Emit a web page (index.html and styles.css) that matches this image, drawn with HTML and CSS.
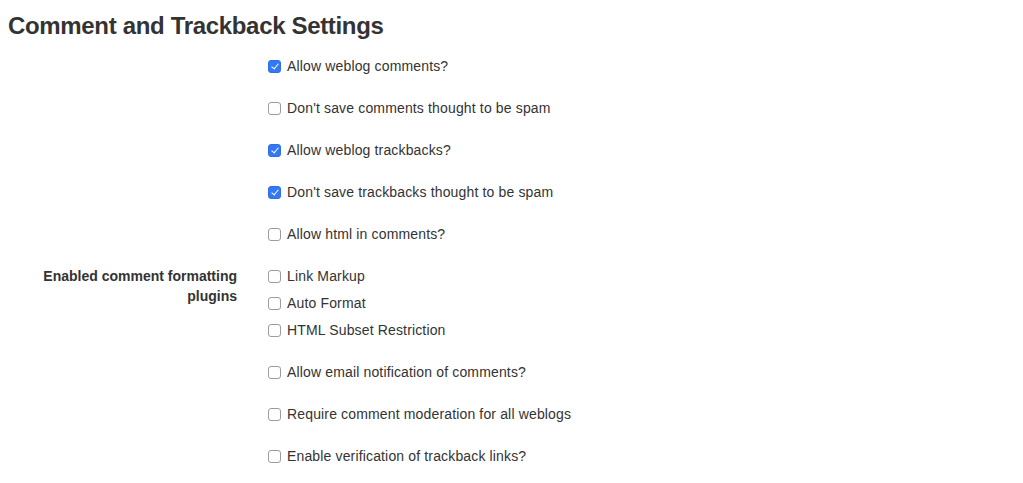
FILE: index.html
```html
<!DOCTYPE html>
<html>
<head>
<meta charset="utf-8">
<link rel="stylesheet" href="styles.css">
</head>
<body>
<h1 class="title">Comment and Trackback Settings</h1>
<form class="settings">
  <div class="row"><div class="label"></div><div class="controls">
    <label class="check"><input type="checkbox" checked><span>Allow weblog comments?</span></label>
  </div></div>
  <div class="row"><div class="label"></div><div class="controls">
    <label class="check"><input type="checkbox"><span>Don't save comments thought to be spam</span></label>
  </div></div>
  <div class="row"><div class="label"></div><div class="controls">
    <label class="check"><input type="checkbox" checked><span>Allow weblog trackbacks?</span></label>
  </div></div>
  <div class="row"><div class="label"></div><div class="controls">
    <label class="check"><input type="checkbox" checked><span>Don't save trackbacks thought to be spam</span></label>
  </div></div>
  <div class="row"><div class="label"></div><div class="controls">
    <label class="check"><input type="checkbox"><span>Allow html in comments?</span></label>
  </div></div>
  <div class="row"><div class="label">Enabled comment formatting plugins</div><div class="controls list">
    <label class="check"><input type="checkbox"><span>Link Markup</span></label>
    <label class="check"><input type="checkbox"><span>Auto Format</span></label>
    <label class="check"><input type="checkbox"><span>HTML Subset Restriction</span></label>
  </div></div>
  <div class="row"><div class="label"></div><div class="controls">
    <label class="check"><input type="checkbox"><span>Allow email notification of comments?</span></label>
  </div></div>
  <div class="row"><div class="label"></div><div class="controls">
    <label class="check"><input type="checkbox"><span>Require comment moderation for all weblogs</span></label>
  </div></div>
  <div class="row"><div class="label"></div><div class="controls">
    <label class="check"><input type="checkbox"><span>Enable verification of trackback links?</span></label>
  </div></div>
</form>
</body>
</html>
```

FILE: styles.css
```css
html, body {
  margin: 0;
  padding: 0;
  background: #fff;
}
body {
  padding: 0 8px;
  font-family: "Liberation Sans", Arial, Helvetica, sans-serif;
  font-size: 14px;
  color: #333;
}
.title {
  margin: 13px 0 6px;
  font-size: 24px;
  line-height: 26px;
  font-weight: bold;
  letter-spacing: -0.33px;
  color: #333;
}
.settings {
  display: flex;
  flex-direction: column;
}
.row {
  display: grid;
  grid-template-columns: 229px 1fr;
  column-gap: 31px;
  padding: 11px 0;
}
.label {
  text-align: right;
  font-weight: bold;
  line-height: 20px;
}
.controls {
  display: flex;
  flex-direction: column;
  gap: 7px;
}
.check {
  display: flex;
  align-items: center;
  gap: 6px;
  line-height: 20px;
  height: 20px;
  letter-spacing: 0.15px;
}
.check input {
  -webkit-appearance: none;
  appearance: none;
  margin: 0;
  width: 13px;
  height: 13px;
  border: 1px solid #9c9c9c;
  border-radius: 3px;
  background: #fff;
  box-sizing: border-box;
  flex: none;
  position: relative;
  top: 0;
}
.check input:checked {
  background: #3478f6;
  border-color: #2f6fe4;
}
.check input:checked::after {
  content: "";
  position: absolute;
  left: 3.5px;
  top: 1.5px;
  width: 3px;
  height: 6px;
  border: solid #fff;
  border-width: 0 1.6px 1.6px 0;
  transform: rotate(40deg);
}
```
